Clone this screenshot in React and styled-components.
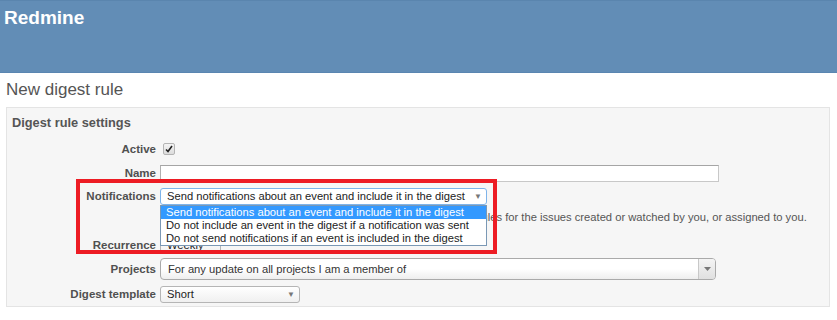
import React from "react";
import styled, { createGlobalStyle } from "styled-components";

const GlobalStyle = createGlobalStyle`
  html, body {
    margin: 0;
    padding: 0;
    background: #ffffff;
  }
  body {
    font-family: "Liberation Sans", Arial, sans-serif;
    font-size: 11.2px;
    color: #333;
  }
`;

const Page = styled.div`
  position: relative;
  width: 837px;
  height: 320px;
  overflow: hidden;
`;

const Header = styled.div`
  height: 73px;
  background: #628db6;
  border-top: 1px solid #5a85ae;
  border-bottom: 1px solid #5a86b1;
  color: #fff;
  padding: 4px 4px 0;
  box-sizing: border-box;
`;

const Logo = styled.h1`
  margin: 0;
  font-size: 19px;
  font-weight: bold;
  line-height: 26px;
`;

const Content = styled.div`
  padding: 0 7px 0 6px;
`;

const PageTitle = styled.h2`
  margin: 0;
  padding: 7px 0 0;
  height: 34px;
  box-sizing: border-box;
  font-size: 17px;
  font-weight: normal;
  line-height: 20px;
  color: #555;
`;

const Box = styled.div`
  background: #f6f6f6;
  border: 1px solid #e4e4e4;
  height: 200px;
  box-sizing: border-box;
  padding-top: 6px;
`;

const BoxTitle = styled.h3`
  margin: 0 0 5px;
  padding-left: 5px;
  font-size: 12.8px;
  font-weight: bold;
  line-height: 18px;
  color: #555;
`;

const Row = styled.div`
  display: flex;
  align-items: ${(p) => p.$align || "center"};
  height: ${(p) => p.$h}px;
`;

const Label = styled.label`
  width: 149px;
  flex: none;
  margin-right: 4px;
  text-align: right;
  font-weight: bold;
  font-size: 11.5px;
  color: #505050;
`;

const Field = styled.div`
  position: relative;
  display: flex;
  align-items: center;
`;

const Check = styled.span`
  margin-left: 3px;
  width: 10px;
  height: 10px;
  border: 1px solid #b4b4b4;
  border-radius: 2px;
  background: linear-gradient(#f4f4f4, #dcdcdc);
  display: flex;
  align-items: center;
  justify-content: center;
`;

const TextInput = styled.div`
  width: 559px;
  height: 17px;
  box-sizing: border-box;
  background: #fff;
  border: 1px solid #c8c8c8;
  border-top-color: #a5a5a5;
  border-left-color: #b0b0b0;
`;

const NativeSelect = styled.div`
  width: ${(p) => p.$w}px;
  height: 17px;
  box-sizing: border-box;
  background: ${(p) => (p.$focus ? "#fff" : "linear-gradient(#ffffff, #f0f0f0)")};
  border: 1px solid ${(p) => (p.$focus ? "#7eb4ea" : "#b5b5b5")};
  border-radius: 3px;
  padding: 0 6px;
  display: flex;
  align-items: center;
  justify-content: space-between;
  color: #222;
  white-space: nowrap;
`;

const Arrow = styled.span`
  font-size: 8px;
  color: #777;
  margin-right: -2px;
`;

const OptionList = styled.div`
  position: absolute;
  left: 0;
  top: 100%;
  width: 327px;
  background: #fff;
  border: 1px solid #7a98b5;
  box-sizing: border-box;
  z-index: 2;
`;

const Option = styled.div`
  height: 13px;
  line-height: 13px;
  padding-left: 5px;
  white-space: nowrap;
  color: ${(p) => (p.$active ? "#fff" : "#222")};
  background: ${(p) => (p.$active ? "#3399ff" : "transparent")};
`;

const Help = styled.em`
  font-style: normal;
  color: #555;
  white-space: nowrap;
  padding-top: 3px;
  line-height: 14px;
`;

const Chosen = styled.div`
  width: 556px;
  height: 22px;
  box-sizing: border-box;
  border: 1px solid #aaa;
  border-radius: 4px;
  background: linear-gradient(#ffffff 50%, #eeeeee);
  display: flex;
  align-items: center;
  color: #333;
`;

const ChosenText = styled.span`
  flex: 1;
  padding-left: 7px;
`;

const ChosenButton = styled.span`
  width: 16px;
  height: 20px;
  border-left: 1px solid #c8c8c8;
  background: linear-gradient(#f4f4f4, #e0e0e0);
  display: flex;
  align-items: center;
  justify-content: center;
  border-radius: 0 3px 3px 0;
`;

const Annotation = styled.div`
  position: absolute;
  left: 76px;
  top: 179px;
  width: 421px;
  height: 75px;
  border: 4px solid #ed1c24;
  box-sizing: border-box;
  z-index: 3;
  pointer-events: none;
`;

const Tri = () => (
  <svg width="7" height="4" viewBox="0 0 7 4">
    <path d="M0 0h7L3.5 4z" fill="#777" />
  </svg>
);

export default function App() {
  return (
    <Page>
      <GlobalStyle />
      <Header>
        <Logo>Redmine</Logo>
      </Header>
      <Content>
        <PageTitle>New digest rule</PageTitle>
        <Box>
          <BoxTitle>Digest rule settings</BoxTitle>
          <Row $h={24}>
            <Label>Active</Label>
            <Field>
              <Check>
                <svg width="8" height="8" viewBox="0 0 8 8">
                  <path d="M1 4.5l2 2L7 1" stroke="#222" strokeWidth="1.6" fill="none" />
                </svg>
              </Check>
            </Field>
          </Row>
          <Row $h={24}>
            <Label>Name</Label>
            <Field>
              <TextInput />
            </Field>
          </Row>
          <Row $h={22}>
            <Label>Notifications</Label>
            <Field>
              <NativeSelect $w={327} $focus>
                <span>Send notifications about an event and include it in the digest</span>
                <Arrow>▼</Arrow>
              </NativeSelect>
              <OptionList>
                <Option $active>Send notifications about an event and include it in the digest</Option>
                <Option>Do not include an event in the digest if a notification was sent</Option>
                <Option>Do not send notifications if an event is included in the digest</Option>
              </OptionList>
            </Field>
          </Row>
          <Row $h={26} $align="flex-start">
            <Label />
            <Help>
              Notifications for events included in a digest use your notification rules for the issues created or watched by you, or assigned to you.
            </Help>
          </Row>
          <Row $h={24}>
            <Label>Recurrence</Label>
            <Field>
              <NativeSelect $w={61}>
                <span>Weekly</span>
              </NativeSelect>
            </Field>
          </Row>
          <Row $h={24}>
            <Label>Projects</Label>
            <Field>
              <Chosen>
                <ChosenText>For any update on all projects I am a member of</ChosenText>
                <ChosenButton>
                  <Tri />
                </ChosenButton>
              </Chosen>
            </Field>
          </Row>
          <Row $h={26}>
            <Label>Digest template</Label>
            <Field>
              <NativeSelect $w={140}>
                <span>Short</span>
                <Arrow>▼</Arrow>
              </NativeSelect>
            </Field>
          </Row>
        </Box>
      </Content>
      <Annotation />
    </Page>
  );
}
